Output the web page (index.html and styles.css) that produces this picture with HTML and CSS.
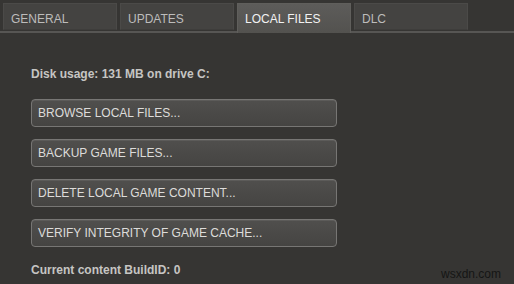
FILE: index.html
```html
<!DOCTYPE html>
<html>
<head>
<meta charset="utf-8">
<link rel="stylesheet" href="styles.css">
</head>
<body>
<div class="window">
  <div class="tabbar">
    <div class="tab">GENERAL</div>
    <div class="tab">UPDATES</div>
    <div class="tab active">LOCAL FILES</div>
    <div class="tab">DLC</div>
  </div>
  <div class="content">
    <div class="label disk">Disk usage: 131 MB on drive C:</div>
    <div class="buttons">
      <div class="btn">BROWSE LOCAL FILES...</div>
      <div class="btn">BACKUP GAME FILES...</div>
      <div class="btn">DELETE LOCAL GAME CONTENT...</div>
      <div class="btn">VERIFY INTEGRITY OF GAME CACHE...</div>
    </div>
    <div class="label build">Current content BuildID: 0</div>
  </div>
  <div class="watermark">wsxdn.com</div>
</div>
</body>
</html>
```
FILE: styles.css
```css
html, body {
  margin: 0;
  padding: 0;
}
body {
  background: #363533;
  font-family: "Liberation Sans", Arial, sans-serif;
  font-size: 12px;
  line-height: 14px;
}
.window {
  position: relative;
  width: 514px;
  height: 284px;
  overflow: hidden;
}
.tabbar {
  display: flex;
  align-items: flex-start;
  gap: 3px;
  padding: 3px 0 1px 3px;
  border-bottom: 2px solid #575654;
}
.tab {
  width: 114px;
  height: 27px;
  box-sizing: border-box;
  padding: 8px 0 0 7px;
  background: #444341;
  border: 1px solid #4b4a48;
  border-bottom-color: #3e3d3b;
  color: #bdbcbb;
}
.tab.active {
  height: 30px;
  margin-bottom: -3px;
  background: linear-gradient(#5d5c5a, #53524f);
  border-color: #605f5c;
  border-bottom: none;
  color: #f2f2f2;
}
.content {
  padding-left: 31px;
}
.label {
  font-weight: bold;
  color: #c6c5c3;
}
.disk {
  margin-top: 34px;
}
.buttons {
  display: flex;
  flex-direction: column;
  gap: 12px;
  margin-top: 18px;
}
.btn {
  width: 306px;
  height: 28px;
  box-sizing: border-box;
  padding: 6px 0 0 6px;
  border: 1px solid #777674;
  border-radius: 4px;
  background: linear-gradient(#504f4d, #454442);
  box-shadow: inset 0 1px 0 #5c5b59;
  color: #dddcda;
}
.build {
  margin-top: 16px;
}
.watermark {
  position: absolute;
  left: 441px;
  top: 267px;
  color: #151515;
  font-size: 12px;
}
```
